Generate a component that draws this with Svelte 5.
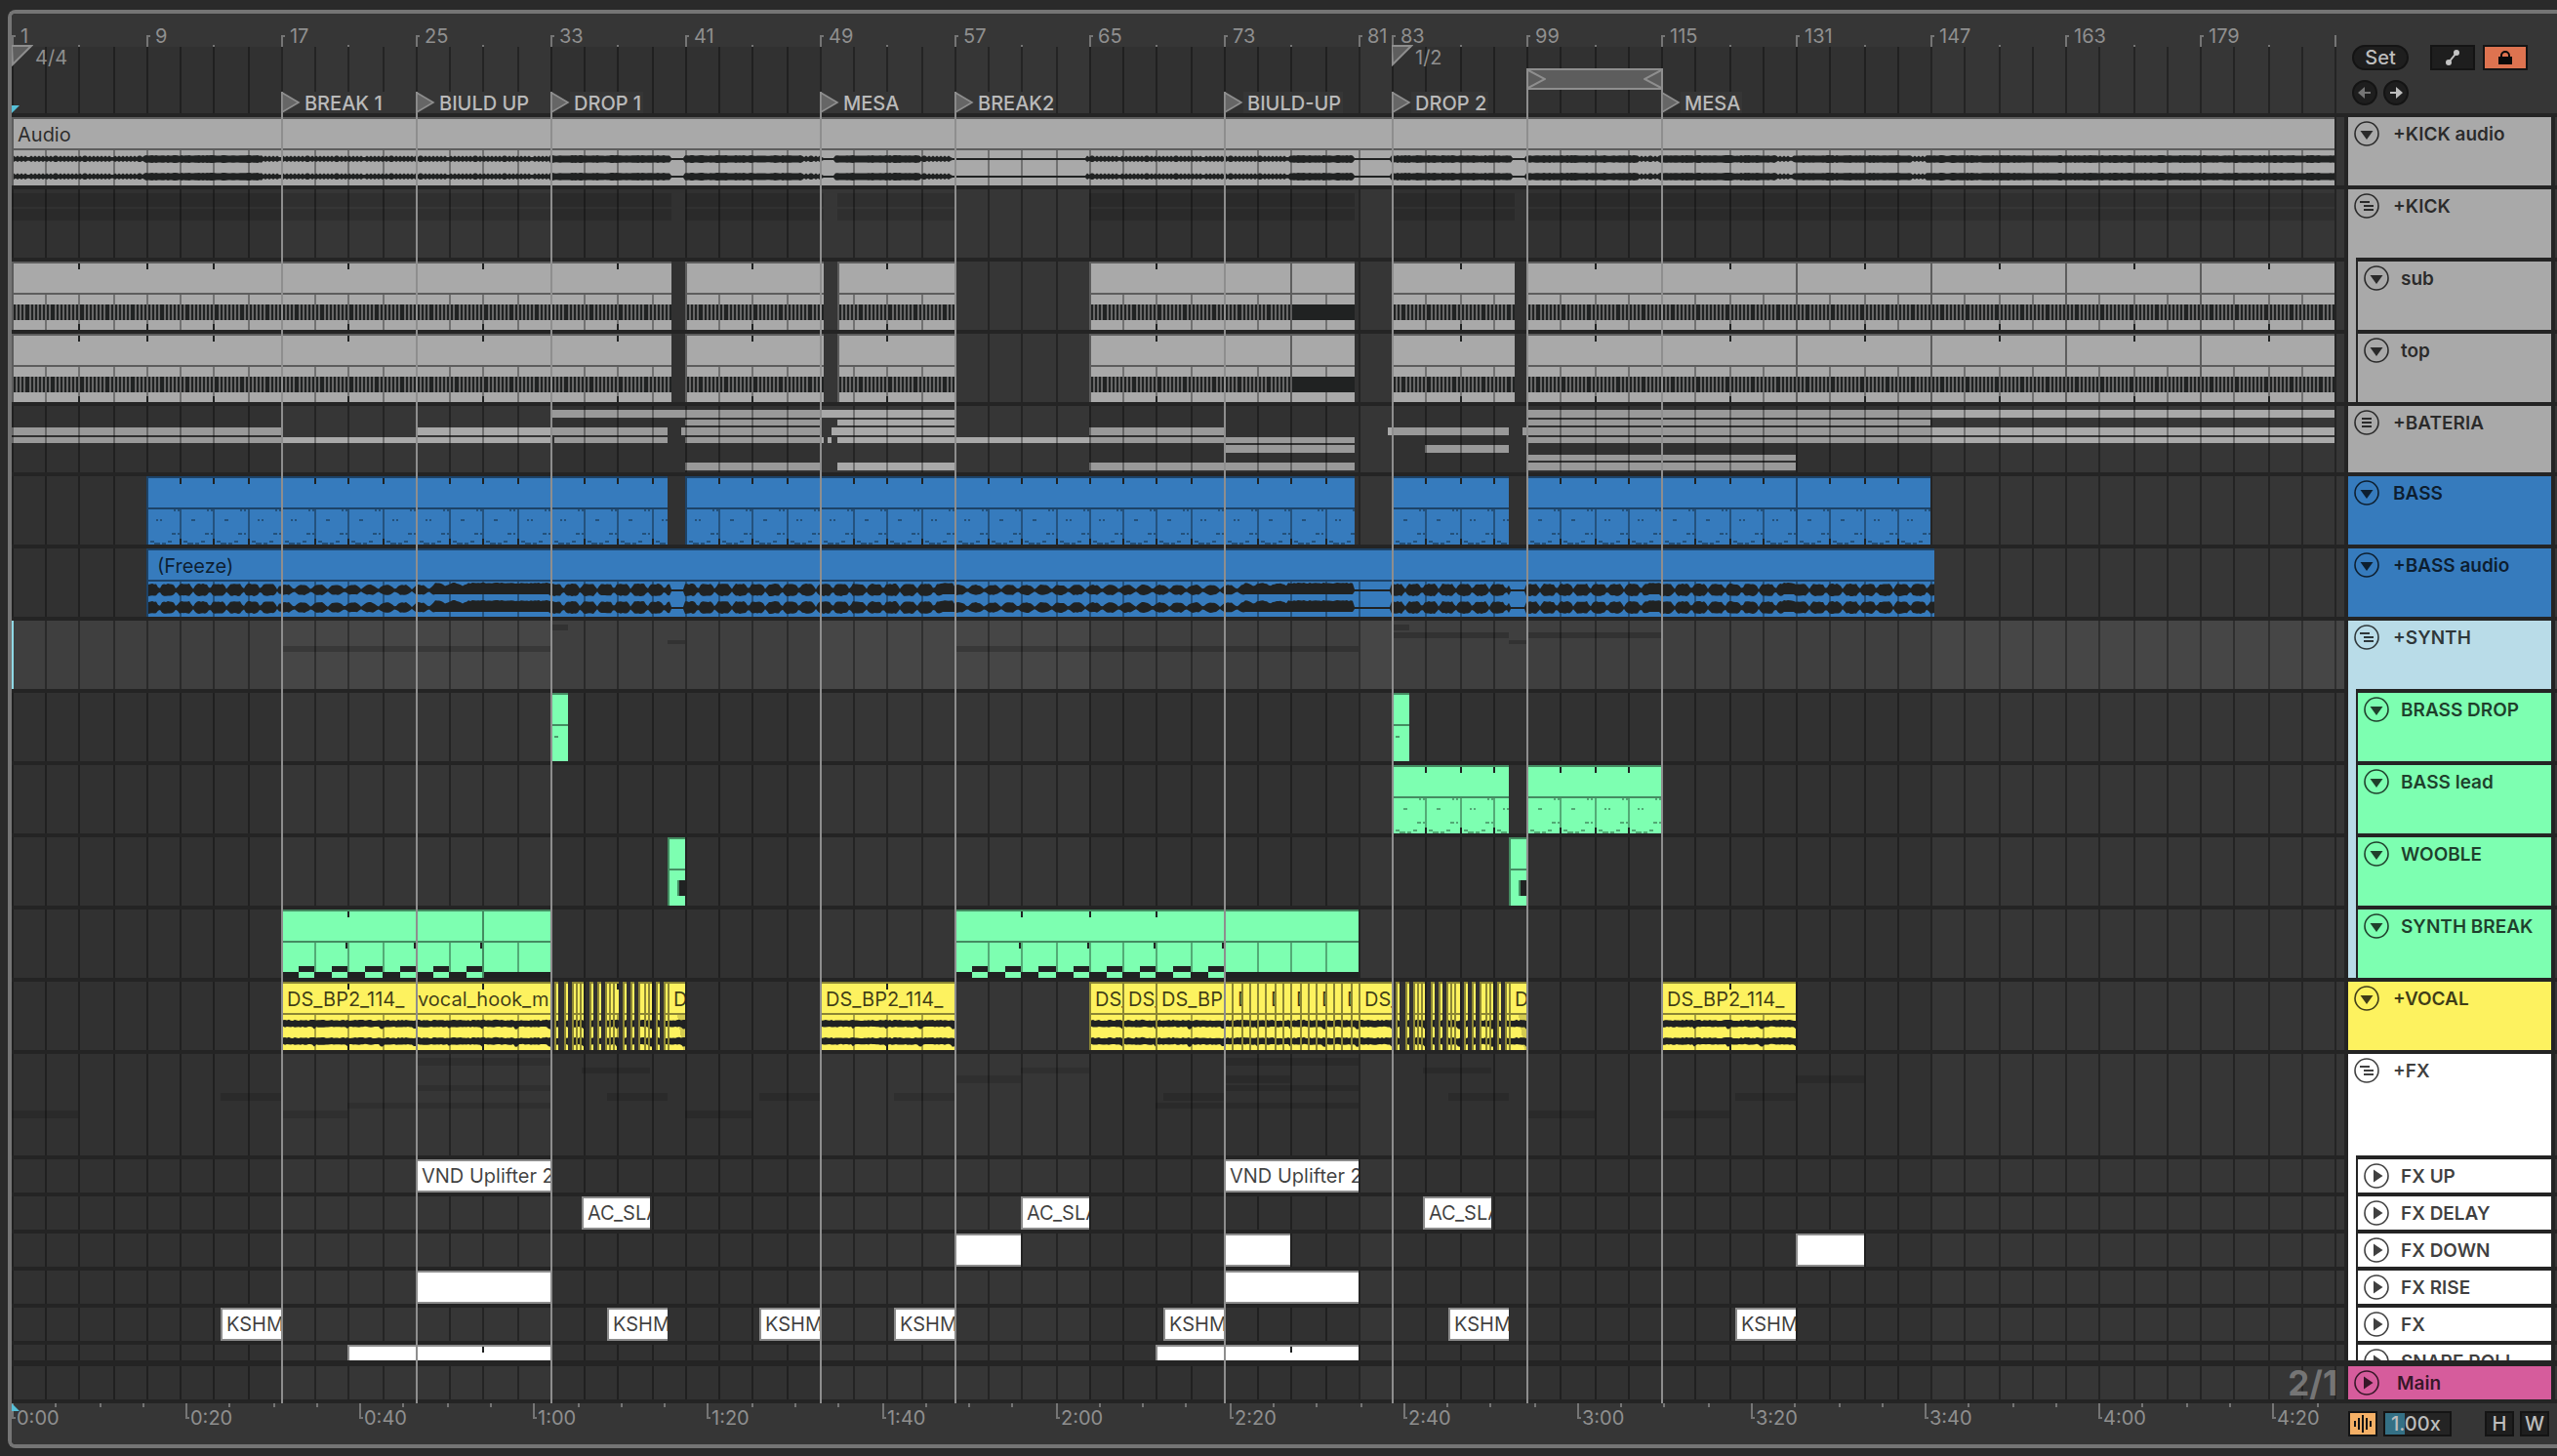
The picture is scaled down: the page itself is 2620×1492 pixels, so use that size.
<script>
  // Lane coordinates: the timeline starts at 12 and is 2390 units wide.
  const START = 12;
  const SPAN = 2390;
  const END = 2392;

  const pct = (x) => ((x - START) / SPAN) * 100;
  const place = (a, b) => `left:${pct(a)}%;width:${pct(b) - pct(a)}%`;
  const at = (x) => `left:${pct(x)}%`;

  // x of grid line k, snapped to even units
  const gx = (k) => START + 2 * Math.ceil(17.25 * k - 0.5);
  const gridK = Array.from({ length: 70 }, (_, k) => k);

  const rect = (x, y, w, h) => `M${x} ${y}h${w}v${h}h${-w}z`;
  const gridPath = gridK.map((k) => rect(gx(k), 0, 2, 100)).join('');
  const shadePath = [[0, 8], [16, 24], [32, 40], [41, 57]]
    .map(([a, b]) => rect(gx(a), 0, gx(b) - gx(a), 100))
    .join('');

  // cheap repeatable noise
  const noise = (n) => {
    const v = Math.sin(n * 12.9898) * 43758.5453;
    return v - Math.floor(v);
  };

  function wavePath(a, b, centers, amp) {
    return centers
      .map((c) => {
        const up = [];
        const down = [];
        for (let x = a; x <= b; x += 2) {
          const [u, d] = amp(x);
          up.push(`${x} ${(c - u).toFixed(1)}`);
          down.unshift(`${x} ${(c + d).toFixed(1)}`);
        }
        return `M${up.join('L')}L${down.join('L')}z`;
      })
      .join('');
  }

  const kickSoft = [[12, 150], [270, 564], [824, 844], [944, 976], [1114, 1322], [1680, 1702], [1820, 1840], [1960, 1974]];
  const kickFlat = [[688, 702], [844, 856], [976, 1114], [1388, 1426], [1550, 1564]];
  const bassFlat = [[688, 702], [1390, 1426], [1548, 1564]];
  const bassLoud = [[480, 564], [966, 978], [1320, 1388], [1690, 1702], [1828, 1840]];
  const bassRise = [[446, 480], [1276, 1320]];
  const bassSoft = [[288, 446], [978, 1276]];
  const inside = (list, x) => list.some(([a, b]) => x >= a && x < b);

  function kickAmp(x) {
    if (inside(kickFlat, x)) return [1, 1];
    if (inside(kickSoft, x)) {
      const a = (x / 4.3) % 1 < 0.5 ? 3.4 : 2;
      return [a, a * 0.9];
    }
    const a = 3.3 + noise(x) * 0.7;
    return [a, a];
  }

  function bassAmp(x) {
    if (inside(bassFlat, x)) return [1, 1];
    if (inside(bassLoud, x)) return [7 + noise(x), 4];
    const p = ((x - 146) / 17.25) % 1;
    if (inside(bassRise, x)) return [4 + Math.sin(Math.PI * p) * 3 + noise(x), 4];
    const soft = inside(bassSoft, x);
    const env = Math.min(1, Math.sin(Math.PI * p) * (soft ? 1.2 : 1.7));
    return [1 + env * (soft ? 4 : 5) + noise(x) * env, 1 + env * (soft ? 3 : 4) + noise(x + 3) * env];
  }

  function vocalAmp(x) {
    const spike = (x - START + 2) % 34.5 < 3 ? 2 : 0;
    return [2.8 + noise(x) * 1.4, 2.8 + noise(x + 7) * 1 + spike];
  }

  // kick hits on every beat: light edge over the dark note
  function hits(a, b) {
    let edge = '';
    for (let i = 0; i < 1104; i++) {
      const x = START + 2 * Math.round(2.156 * i);
      if (x < a || x >= b) continue;
      if (a === 1322 && x !== 1352) continue;
      edge += rect(x, 42, 2, 16);
    }
    return edge;
  }

  // offsets inside one grid cell: [x, y, w]
  const riff = [[28, 32, 2], [32, 32, 2], [26, 56, 4], [32, 56, 2], [4, 64, 4], [22, 64, 4], [8, 66, 6], [16, 66, 4]];
  function riffPath(a, b) {
    let d = '';
    gridK.forEach((k) => {
      const x0 = gx(k);
      const mid = k % 4 === 1 || k % 4 === 2 ? [[12, 42, 4]] : [[10, 42, 2], [14, 42, 2]];
      [...riff, ...mid].forEach(([x, y, w]) => {
        if (x0 + x >= a && x0 + x + w <= b) d += rect(x0 + x, y, w, 2);
      });
    });
    return d;
  }

  function breakPath(a, b) {
    let d = '';
    const last = a < 900 ? 494 : 1254;
    gridK.forEach((k) => {
      const x0 = gx(k);
      const x1 = gx(k + 1);
      if (x0 < a || x0 >= b) return;
      if (x0 >= last) {
        d += rect(x0, 62, x1 - x0, 6);
        return;
      }
      d += rect(x0, 62, 18, 6) + rect(x0 + 18, 56, x1 - x0 - 18, 6);
      if (k % 2) d += rect(x1 - 2, 32, 2, 6);
    });
    return d;
  }

  // which grid lines carry a loop tick
  const everyOther = (k) => (k < 41 ? k % 2 === 0 : k % 2 === 1);
  const lines = (a, b, test = () => true) => gridK.filter((k) => gx(k) > a && gx(k) < b - 1 && test(k)).map(gx);

  const drums = [[12, 288], [288, 426], [426, 564], [564, 688], [702, 844], [858, 978], [1116, 1322], [1322, 1388], [1426, 1552], [1564, 1702], [1702, 1840], [1840, 1978], [1978, 2116], [2116, 2254], [2254, 2392]];
  const clips = (kind, list) => list.map(([a, b, name = '']) => ({ kind, a, b, name }));

  const slices = [[4, 8], [14, 18], [22, 26], [26, 30], [30, 34], [40, 44], [48, 52], [56, 60], [60, 64], [64, 70], [74, 78], [82, 86], [90, 96], [96, 100], [100, 104], [108, 112], [116, 120]];
  const chops = [1254, 1262, 1272, 1280, 1288, 1296, 1306, 1314, 1322, 1332, 1340, 1348, 1358, 1366, 1374, 1384, 1392];
  const vocals = [
    ...clips('vocal', [[288, 426, 'DS_BP2_114_'], [684, 702, 'D'], [840, 978, 'DS_BP2_114_'], [1116, 1150, 'DS_'], [1150, 1184, 'DS_'], [1184, 1254, 'DS_BP'], [1392, 1426, 'DS_'], [1546, 1564, 'D'], [1702, 1840, 'DS_BP2_114_']]),
    { kind: 'vocal', a: 426, b: 564, name: 'vocal_hook_m', tight: true },
    ...chops.slice(0, -1).map((a, i) => ({ kind: 'vocal', a, b: chops[i + 1], name: chops[i + 1] - a > 9 ? 'D' : '' })),
    ...[564, 1426].flatMap((o) => clips('vocal', slices.map(([a, b]) => [o + a, o + b])))
  ];

  const spread = (y, h, list) => list.map(([a, b]) => ({ y, h, a, b }));
  const kickSpans = [[12, 688], [702, 844], [858, 978], [1116, 1388], [1426, 1552], [1564, END]];

  const kickMap = [...spread(4, 14, kickSpans), ...spread(20, 12, kickSpans)];
  const drumMap = [
    ...spread(4, 8, [[564, 978], [1566, END]]),
    ...spread(14, 6, [[702, 840], [858, 978], [1566, 1978]]),
    ...spread(22, 8, [[12, 288], [426, 684], [698, 840], [852, 978], [1116, 1254], [1422, 1546], [1560, END]]),
    ...spread(32, 6, [[12, 564], [568, 684], [702, 844], [848, 852], [858, 1388], [1566, END]]),
    ...spread(40, 8, [[1254, 1388], [1460, 1546]]),
    ...spread(50, 6, [[1566, 1840]]),
    ...spread(58, 8, [[702, 840], [858, 978], [1116, 1388], [1566, 1840]])
  ];
  const synthMap = [
    ...spread(4, 6, [[564, 582], [1426, 1444]]),
    ...spread(12, 6, [[1426, 1546], [1564, 1702]]),
    ...spread(20, 4, [[684, 702], [1546, 1564]]),
    ...spread(26, 6, [[288, 564], [978, 1392]])
  ];
  const fxMap = [
    ...spread(4, 8, [[426, 564], [1254, 1392]]),
    ...spread(14, 6, [[596, 666], [1046, 1116], [1458, 1528]]),
    ...spread(22, 8, [[978, 1046], [1254, 1322], [1840, 1910]]),
    ...spread(32, 6, [[426, 564], [1254, 1392]]),
    ...spread(40, 8, [[226, 288], [622, 684], [778, 840], [916, 978], [1192, 1254], [1484, 1546], [1778, 1840]]),
    ...spread(50, 6, [[356, 564], [1184, 1392]]),
    ...spread(58, 8, [[12, 80], [288, 356], [702, 770], [1564, 1634], [1702, 1772]])
  ];

  const kshm = [226, 622, 778, 916, 1192, 1484, 1778].map((a) => [a, a + 62, 'KSHM']);

  const tracks = [
    { name: '+KICK audio', color: 'gray', icon: 'down', clips: clips('kick', [[12, END, 'Audio']]) },
    { name: '+KICK', color: 'gray', icon: 'group', map: kickMap },
    { name: 'sub', color: 'gray', icon: 'down', group: 'gray', clips: clips('hits', drums) },
    { name: 'top', color: 'gray', icon: 'down', group: 'gray', clips: clips('hits', drums) },
    { name: '+BATERIA', color: 'gray', icon: 'list', size: 'drum', map: drumMap, bright: true },
    { name: 'BASS', color: 'blue', icon: 'down', clips: clips('riff', [[150, 684], [702, 1388], [1426, 1546], [1564, 1840], [1840, 1978]]) },
    { name: '+BASS audio', color: 'blue', icon: 'down', clips: clips('bass', [[150, 1982, '(Freeze)']]) },
    { name: '+SYNTH', color: 'ice', icon: 'group', map: synthMap, selected: true },
    { name: 'BRASS DROP', color: 'green', icon: 'down', group: 'ice', clips: clips('stab', [[564, 582], [1426, 1444]]) },
    { name: 'BASS lead', color: 'green', icon: 'down', group: 'ice', clips: clips('riff', [[1426, 1546], [1564, 1702]]) },
    { name: 'WOOBLE', color: 'green', icon: 'down', group: 'ice', clips: clips('wob', [[684, 702], [1546, 1564]]) },
    { name: 'SYNTH BREAK', color: 'green', icon: 'down', group: 'ice', clips: clips('break', [[288, 426], [426, 494], [494, 564], [978, 1254], [1254, 1392]]) },
    { name: '+VOCAL', color: 'yellow', icon: 'down', clips: vocals },
    { name: '+FX', color: 'white', icon: 'group', size: 'tall', map: fxMap },
    { name: 'FX UP', color: 'white', icon: 'right', group: 'white', size: 'short', clips: clips('flat', [[426, 564, 'VND Uplifter 2'], [1254, 1392, 'VND Uplifter 2']]) },
    { name: 'FX DELAY', color: 'white', icon: 'right', group: 'white', size: 'short', clips: clips('flat', [[596, 666, 'AC_SLA'], [1046, 1116, 'AC_SLA'], [1458, 1528, 'AC_SLA']]) },
    { name: 'FX DOWN', color: 'white', icon: 'right', group: 'white', size: 'short', clips: clips('flat', [[978, 1046], [1254, 1322], [1840, 1910]]) },
    { name: 'FX RISE', color: 'white', icon: 'right', group: 'white', size: 'short', clips: clips('flat', [[426, 564], [1254, 1392]]) },
    { name: 'FX', color: 'white', icon: 'right', group: 'white', size: 'short', clips: clips('flat', kshm) },
    { name: 'SNARE ROLL', color: 'white', icon: 'right', group: 'white', size: 'cut', clips: clips('roll', [[356, 564], [1184, 1392]]) }
  ];

  const bars = [[0, 1], [4, 9], [8, 17], [12, 25], [16, 33], [20, 41], [24, 49], [28, 57], [32, 65], [36, 73], [40, 81], [41, 83], [45, 99], [49, 115], [53, 131], [57, 147], [61, 163], [65, 179]];
  const rulerPath =
    bars.map(([k]) => rect(gx(k), 22, 2, 12) + rect(gx(k), 22, 4, 2)).join('') +
    rect(gx(69), 22, 2, 12) +
    [2, 6, 10, 14, 18, 22, 26, 30, 34, 38, 43, 47, 51, 55, 59, 63, 67].map((k) => rect(gx(k), 32, 2, 2)).join('');

  const locators = [
    [288, 'BREAK 1'], [426, 'BIULD UP'], [564, 'DROP 1'], [840, 'MESA'],
    [978, 'BREAK2'], [1254, 'BIULD-UP'], [1426, 'DROP 2'], [1702, 'MESA']
  ];
  const signatures = [[12, '4/4'], [1426, '1/2']];

  const times = Array.from({ length: 14 }, (_, i) => {
    const s = i * 20;
    return { x: START + 2 * Math.round(i * 89.1), label: `${Math.floor(s / 60)}:${String(s % 60).padStart(2, '0')}` };
  });
  const timePath =
    times.map((t) => rect(t.x, 0, 2, 16) + rect(t.x, 14, 4, 2)).join('') +
    Array.from({ length: 54 }, (_, i) => (i % 4 ? rect(START + 2 * Math.round(i * 22.275), 0, 2, 4) : '')).join('');

  let locked = true;
  let speed = '1.00x';
</script>

{#snippet grid()}
  <svg class="fill" viewBox="{START} 0 {SPAN} 100" preserveAspectRatio="none" aria-hidden="true">
    <path d={shadePath} fill="rgba(0,0,0,.09)" />
    <path d={gridPath} fill="rgba(0,0,0,.33)" />
  </svg>
{/snippet}

{#snippet dial(icon)}
  <svg class="dial" viewBox="0 0 26 26" aria-hidden="true">
    <circle cx="13" cy="13" r="12" fill="none" stroke="currentColor" stroke-width="1.6" />
    {#if icon === 'down'}
      <path d="M6.5 10h13L13 19z" fill="currentColor" />
    {:else if icon === 'right'}
      <path d="M10 6.5v13L19.5 13z" fill="currentColor" />
    {:else if icon === 'list'}
      <path d="M8 9h10M8 13h10M8 17h10" stroke="currentColor" stroke-width="2" />
    {:else}
      <path d="M6 9h10M10 13h10M10 17h10" stroke="currentColor" stroke-width="2" />
    {/if}
  </svg>
{/snippet}

{#snippet art(c)}
  <svg class="fill" viewBox="{c.a + 2} 0 {c.b - c.a - 2} 68" preserveAspectRatio="none" aria-hidden="true">
    {#if c.kind !== 'stab' && c.kind !== 'wob'}
      {#each lines(c.a, c.b) as x}
        <rect {x} y="32" width="2" height="36" fill="rgba(0,0,0,.33)" />
      {/each}
    {/if}
    {#if c.kind === 'kick'}
      <path class="ink signal" d={wavePath(c.a, c.b, [41, 59], kickAmp)} />
    {:else if c.kind === 'bass'}
      <path class="ink signal" d={wavePath(c.a, c.b, [41, 59], bassAmp)} />
    {:else if c.kind === 'vocal'}
      {#if c.b - c.a === 18}
        <path d="M{c.a + 10} 32H{c.b}V68H{c.b - 2}z" fill="rgba(0,0,0,.16)" />
      {/if}
      <path class="ink signal" d={wavePath(c.a, c.b, [41, 59], vocalAmp)} />
    {:else if c.kind === 'hits'}
      <rect class="ink" x={c.a} y="42" width={c.b - c.a} height="16" />
      <path d={hits(c.a, c.b)} fill="#686868" />
    {:else if c.kind === 'riff'}
      <path d={riffPath(c.a, c.b)} fill="rgba(0,0,0,.34)" />
    {:else if c.kind === 'stab'}
      <rect x={c.a + 4} y="42" width="4" height="2" fill="rgba(0,0,0,.4)" />
    {:else if c.kind === 'wob'}
      <rect x={c.a + 10} y="42" width="2" height="16" fill="rgba(0,0,0,.45)" />
      <rect class="ink" x={c.a + 12} y="42" width="6" height="16" />
    {:else if c.kind === 'break'}
      <path class="ink" d={breakPath(c.a, c.b)} />
    {/if}
    {#if c.kind === 'hits' || c.kind === 'riff'}
      {#each lines(c.a, c.b, c.kind === 'hits' ? everyOther : undefined) as x}
        <path class="ink" d={rect(x, 0, 2, 6) + rect(x, 62, 2, 6)} />
      {/each}
    {:else if c.kind === 'vocal' || (c.kind === 'break' && c.a !== 1254)}
      {#each lines(c.a, c.b, everyOther) as x}
        <path class="ink" d={rect(x, 0, 2, 6)} />
        {#if c.kind === 'vocal'}<path class="ink" d={rect(x, 62, 2, 6)} />{/if}
      {/each}
    {/if}
  </svg>
{/snippet}

<main class="window">
  <section class="arranger">
    <header class="top">
      <div class="ruler">
        <div class="beats">{@render grid()}</div>
        <svg class="fill" viewBox="{START} 0 {SPAN} 102" preserveAspectRatio="none" aria-hidden="true">
          <path d={rulerPath} fill="#757575" />
        </svg>
        {#each bars as [k, n]}
          <span class="bar" style={at(gx(k))}>{n}</span>
        {/each}
        {#each signatures as [x, text]}
          <span class="signature" style={at(x)}>
            <svg width="22" height="22" viewBox="0 0 22 22" aria-hidden="true">
              <path d="M0 1H20L1 20z" fill="#5e5e5e" stroke="#8e8e8e" stroke-width="2" />
            </svg>
            {text}
          </span>
        {/each}
        <svg class="playhead" viewBox="0 0 8 8" aria-hidden="true"><path d="M0 0h8L0 8z" fill="#56c0d8" /></svg>
      </div>
      <div class="controls">
        <div class="control-row">
          <button type="button" class="pill">Set</button>
          <button type="button" class="square" aria-label="Automation mode">
            <svg viewBox="0 0 42 22" aria-hidden="true">
              <path d="M17 16 25 6" stroke="#c4c4c4" stroke-width="2" />
              <circle cx="17" cy="16" r="3" fill="#c4c4c4" /><circle cx="25" cy="6" r="3" fill="#c4c4c4" />
            </svg>
          </button>
          <button type="button" class="square lock" class:on={locked} aria-label="Lock envelopes" aria-pressed={locked} on:click={() => (locked = !locked)}>
            <svg viewBox="0 0 42 22" aria-hidden="true">
              <path d="M14 10h14v8H14z" fill="#0a0a0a" />
              <path d="M17 11V9a4 4 0 0 1 8 0v2" fill="none" stroke="#0a0a0a" stroke-width="2" />
            </svg>
          </button>
        </div>
        <div class="control-row arrows">
          <button type="button" class="round dim" aria-label="Previous locator">
            <svg viewBox="0 0 22 22" aria-hidden="true"><path d="M4 11 11 5v5h6v2h-6v5z" fill="currentColor" /></svg>
          </button>
          <button type="button" class="round" aria-label="Next locator">
            <svg viewBox="0 0 22 22" aria-hidden="true"><path d="M18 11 11 5v5H5v2h6v5z" fill="currentColor" /></svg>
          </button>
        </div>
      </div>
    </header>

    {#each tracks as t}
      <div class="track {t.size ?? ''} {t.color}" class:selected={t.selected}>
        <div class="lane">
          {#if t.map}
            <svg class="fill" viewBox="{START} 0 {SPAN} {t.size === 'tall' ? 104 : t.size === 'drum' ? 68 : 70}" preserveAspectRatio="none" aria-hidden="true">
              {#each t.map as m}
                <rect x={m.a} y={m.y} width={m.b - m.a} height={m.h} fill={t.bright ? '#a9a9a9' : t.selected ? 'rgba(0,0,0,.2)' : 'rgba(0,0,0,.13)'} />
              {/each}
            </svg>
          {/if}
          {@render grid()}
          {#each t.clips ?? [] as c}
            <div class="clip {c.kind}" class:tight={c.tight} style={place(c.a, c.b)}>
              {#if c.kind === 'roll'}
                <svg class="fill" viewBox="{c.a + 2} 0 {c.b - c.a - 2} 14" preserveAspectRatio="none" aria-hidden="true">
                  <rect class="ink" x={c.b - 70} y="0" width="2" height="6" />
                </svg>
              {:else if c.kind !== 'flat'}
                {@render art(c)}
              {/if}
              {#if c.kind !== 'roll'}
                <div class="title">{c.name}</div>
              {/if}
            </div>
          {/each}
        </div>
        <div class="head">
          {#if t.group}<div class="strip {t.group}"></div>{/if}
          <div class="plate">
            <button type="button" class="fold" aria-label="Fold {t.name}">{@render dial(t.icon)}</button>
            <span class="name">{t.name}</span>
          </div>
        </div>
        <div class="tail"></div>
      </div>
    {/each}

    <div class="track main short pink">
      <div class="lane">
        {@render grid()}
        <span class="zoom">2/1</span>
      </div>
      <div class="head">
        <div class="plate">
          <button type="button" class="fold" aria-label="Fold Main">{@render dial('right')}</button>
          <span class="name">Main</span>
        </div>
      </div>
      <div class="tail"></div>
    </div>

    <footer class="bottom">
      <div class="clock">
        <svg class="fill" viewBox="{START} 0 {SPAN} 42" preserveAspectRatio="none" aria-hidden="true">
          <path d={timePath} fill="#757575" />
        </svg>
        {#each times as t}
          <span class="time" style={at(t.x)}>{t.label}</span>
        {/each}
        <svg class="playhead low" viewBox="0 0 8 8" aria-hidden="true"><path d="M0 0l8 8H0z" fill="#56c0d8" /></svg>
      </div>
      <div class="transport">
        <button type="button" class="mini wave" aria-label="Overview">
          <svg viewBox="0 0 26 22" aria-hidden="true">
            <path d="M5 8v6M9 5v12M13 2v18M17 5v12M21 8v6" stroke="#141414" stroke-width="2" />
          </svg>
        </button>
        <input class="speed" aria-label="Waveform zoom" bind:value={speed} />
        <button type="button" class="mini push">H</button>
        <button type="button" class="mini">W</button>
      </div>
    </footer>

    <div class="overlay">
      <div class="loop" style={place(1564, 1704)}>
        <div class="brace">
          <svg class="left" viewBox="0 0 18 18" aria-hidden="true"><path d="M0 0 17 9 0 18" /></svg>
          <svg class="right" viewBox="0 0 18 18" aria-hidden="true"><path d="M18 0 1 9 18 18" /></svg>
        </div>
      </div>
      {#each locators as [x, name]}
        <div class="locator" style={at(x)}>
          <svg width="20" height="22" viewBox="0 0 20 22" aria-hidden="true">
            <path d="M1 1 18 11 1 21z" fill="#666" stroke="#8e8e8e" stroke-width="1.6" />
          </svg>
          <span>{name}</span>
        </div>
      {/each}
    </div>
  </section>
</main>

<style>
  :global(body) {
    background: #2a2a2a;
  }

  .window {
    padding: 10px 0 8px 8px;
    font-family: Inter, 'Liberation Sans', sans-serif;
    font-size: 20px;
    line-height: 24px;
    color: #8f8f8f;
    overflow: hidden;
  }

  .arranger {
    position: relative;
    border: 4px solid #757575;
    border-right: 0;
    border-radius: 8px 0 0 8px;
    background: #242424;
    overflow: hidden;
  }

  button,
  input {
    font: inherit;
    margin: 0;
    padding: 0;
    box-sizing: border-box;
    cursor: pointer;
  }

  svg {
    display: block;
  }

  .fill {
    position: absolute;
    inset: 0;
    width: 100%;
    height: 100%;
    shape-rendering: crispEdges;
  }

  .ink {
    fill: #202222;
  }

  .signal {
    shape-rendering: auto;
  }

  /* ruler */
  .top,
  .bottom {
    display: flex;
    background: #363636;
  }

  .ruler {
    position: relative;
    flex: 1;
    height: 102px;
  }

  .beats {
    position: absolute;
    inset: 34px 0 0;
  }

  .bar,
  .signature,
  .time {
    position: absolute;
    white-space: nowrap;
  }

  .bar {
    top: 11px;
    padding-left: 9px;
  }

  .signature {
    top: 32px;
    display: flex;
    gap: 2px;
    line-height: 26px;
  }

  .playhead {
    position: absolute;
    left: 0;
    bottom: 0;
    width: 8px;
    height: 8px;
  }

  .playhead.low {
    top: 0;
  }

  .controls {
    box-sizing: border-box;
    width: 218px;
    padding: 32px 0 0 8px;
  }

  .control-row {
    display: flex;
    gap: 8px;
  }

  .arrows {
    gap: 6px;
    margin-top: 10px;
  }

  .pill,
  .square,
  .round,
  .mini,
  .speed {
    height: 26px;
    border: 2px solid #141414;
    background: #1e1e1e;
    color: #bdbdbd;
    line-height: 22px;
    font-weight: 500;
  }

  .pill {
    width: 58px;
    border-radius: 13px;
    margin-right: 14px;
  }

  .square {
    width: 46px;
  }

  .square.on {
    background: #de7350;
  }

  .round {
    width: 26px;
    border-radius: 13px;
  }

  .round.dim {
    color: #757575;
  }

  /* tracks */
  .track {
    --c: #a9a9a9;
    display: flex;
    height: 74px;
  }

  .track.drum { height: 72px; }
  .track.tall { height: 108px; }
  .track.short { height: 38px; }
  .track.cut { height: 20px; }
  .track.main { height: 40px; }

  .gray { --c: #a9a9a9; }
  .blue { --c: #367bbd; }
  .ice { --c: #b9dce8; }
  .green { --c: #7dffb1; }
  .yellow { --c: #fdf25f; }
  .white { --c: #fff; }
  .pink { --c: #d65c9c; }

  .lane {
    position: relative;
    flex: 1;
    margin-top: 4px;
    background: #363636;
    overflow: hidden;
  }

  .main .lane,
  .main .plate,
  .main .tail {
    margin-top: 6px;
  }

  .selected .lane {
    background: #464646;
  }

  /* insert marker at the start of the selected track */
  .selected .lane::after {
    content: '';
    position: absolute;
    inset: 0 auto 0 0;
    width: 2px;
    background: #8fd9e6;
  }

  .selected .tail {
    background: #464646;
  }

  .clip {
    position: absolute;
    top: 0;
    bottom: 0;
    box-sizing: border-box;
    border: solid rgba(0, 0, 0, 0.45);
    border-width: 2px 0 0 2px;
    background: var(--c);
    color: rgba(0, 0, 0, 0.75);
    overflow: hidden;
  }

  .clip.flat {
    border-bottom-width: 2px;
  }

  .title {
    position: relative;
    height: 30px;
    line-height: 32px;
    padding-left: 4px;
    border-bottom: 2px solid rgba(0, 0, 0, 0.45);
    white-space: nowrap;
    overflow: hidden;
  }

  .bass .title {
    padding-left: 9px;
  }

  .tight .title {
    padding-left: 0;
  }

  .flat .title {
    line-height: 30px;
    border-bottom: 0;
  }

  .head {
    display: flex;
    width: 208px;
    margin: 0 4px;
    overflow: hidden;
  }

  .strip {
    width: 8px;
    margin-right: 2px;
    background: var(--c);
  }

  .plate {
    flex: 1;
    display: flex;
    align-items: flex-start;
    gap: 14px;
    margin-top: 4px;
    padding: 4px 0 0 6px;
    background: var(--c);
    color: rgba(0, 0, 0, 0.75);
    font-size: 19px;
    font-weight: 600;
    overflow: hidden;
  }

  .strip + .plate {
    gap: 12px;
  }

  .fold {
    flex: none;
    width: 26px;
    height: 26px;
    border: 0;
    background: none;
    color: inherit;
  }

  .name {
    line-height: 28px;
    white-space: nowrap;
  }

  .main .plate {
    gap: 18px;
  }

  .tail {
    width: 2px;
    margin-top: 4px;
    background: #363636;
  }

  .zoom {
    position: absolute;
    right: 7px;
    top: 0;
    font-size: 35px;
    line-height: 34px;
    font-weight: 700;
    color: #757575;
  }

  /* time ruler */
  .bottom {
    margin-top: 4px;
  }

  .clock {
    position: relative;
    flex: 1;
    height: 42px;
    overflow: hidden;
  }

  .time {
    top: 3px;
    padding-left: 5px;
  }

  .transport {
    box-sizing: border-box;
    width: 218px;
    display: flex;
    gap: 6px;
    padding: 8px 0 0 4px;
  }

  .mini {
    width: 30px;
  }

  .wave {
    background: #f5b066;
  }

  .push {
    margin-left: 28px;
  }

  .speed {
    width: 70px;
    padding-left: 6px;
    background: linear-gradient(90deg, #347085 20px, #242424 20px);
  }

  /* loop brace and locators */
  .overlay {
    position: absolute;
    inset: 56px 218px 42px 0;
    pointer-events: none;
  }

  .loop {
    position: absolute;
    top: 0;
    bottom: 0;
    box-sizing: border-box;
    border: solid #8e8e8e;
    border-width: 0 2px;
  }

  .brace {
    display: flex;
    justify-content: space-between;
    box-sizing: border-box;
    height: 22px;
    border: solid #8e8e8e;
    border-width: 2px 0;
    background: #5d5d5d;
  }

  .brace svg {
    width: 18px;
    height: 18px;
    fill: none;
    stroke: #8e8e8e;
    stroke-width: 2;
  }

  .locator {
    position: absolute;
    top: 24px;
    bottom: 0;
    display: flex;
    align-items: flex-start;
    border-left: 2px solid #8e8e8e;
    color: #bababa;
    font-weight: 500;
    line-height: 24px;
    white-space: nowrap;
  }

  .locator svg {
    margin-left: -2px;
  }

  .locator span {
    height: 22px;
    padding: 0 2px 0 4px;
    background: #363636;
  }
</style>
